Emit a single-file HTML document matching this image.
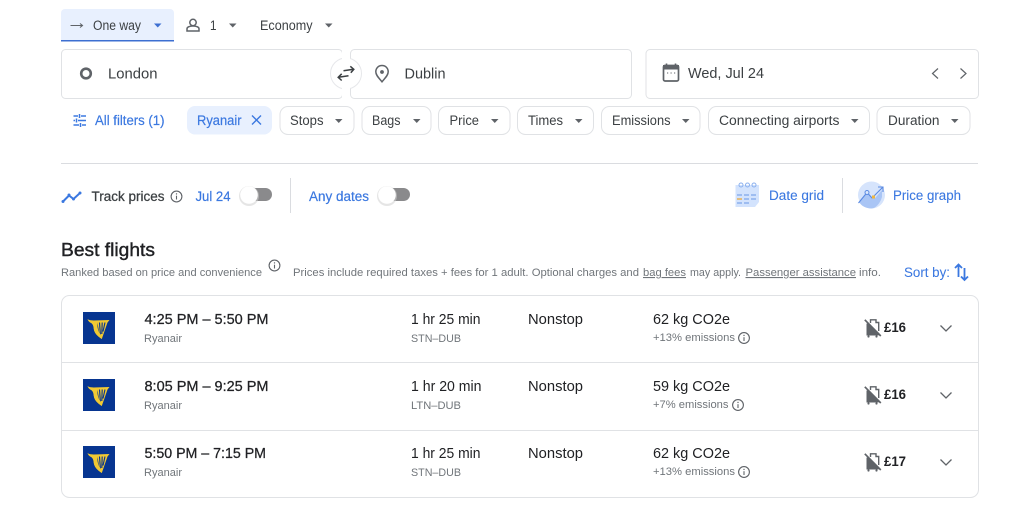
<!DOCTYPE html>
<html lang="en"><head><meta charset="utf-8"><title>Flights</title>
<style>
html,body{margin:0;padding:0;background:#fff;width:1024px;height:525px;overflow:hidden}
svg{display:block;filter:blur(.35px)}
text{font-family:"Liberation Sans",Arial,sans-serif}
.g{fill:#3c4043;font-size:13.500px}
.l{fill:#3c4043;font-size:14.500px}
.d{fill:#202124;font-size:14.500px}
.m{fill:#202124;font-size:14.500px;stroke:#202124;stroke-width:.25}
.b{fill:#3b78e0;font-size:13.500px;stroke:#3b78e0;stroke-width:.2}
.s{fill:#70757a;font-size:11px}
.c{fill:none;stroke:#e0e2e5;stroke-width:1}
.i{fill:none;stroke:#5f6368;stroke-width:1.100}
</style></head><body>
<svg width="1024" height="525" viewBox="0 0 1024 525" xmlns="http://www.w3.org/2000/svg">
<defs>
<g id="logo">
<rect width="32" height="32" fill="#073590"/>
<path d="M4.500 7C6.500 8.500 8.500 8.200 10.500 8.500L26.500 8L24.500 10.500L18.800 27C15 24.500 11.500 21.500 10.800 17C10.500 14 9.800 12 8 11C6.500 10.200 5 9 4.500 7Z" fill="#f1c933"/>
<path d="M13.800 10.500L15.800 21.500M16.500 10.500L17.400 22.500M19.200 10.500L18.800 22M22 10.500L20 19.500" stroke="#073590" stroke-width="1.150" fill="none"/>
<path d="M12.500 10.300L14.500 10.300C14 15 15 20 18.500 23.500L18.800 27C15 24.500 11.500 21.500 10.800 17C10.700 14.500 11 12 12.500 10.300Z" fill="#f1c933"/>
</g>
<g id="bag">
<path d="M2.500 4.500V16.500H14.500V14.500L4.500 4.500Z" fill="#5f6368"/>
<path d="M6.500 4V.8H12V3.500H14.700V12" fill="none" stroke="#5f6368" stroke-width="1.400"/>
<path d="M.8 .8L16.800 17" stroke="#5f6368" stroke-width="1.700"/>
<circle cx="4.500" cy="17.500" r="1.100" fill="#5f6368"/><circle cx="12.500" cy="17.500" r="1.100" fill="#5f6368"/>
</g>
<path id="car" d="M0 0H7.500L3.750 4Z" fill="#5f6368"/>
<g id="info"><circle r="5.400" class="i"/><path d="M0 -.8V3" stroke="#5f6368" stroke-width="1.100"/><circle cy="-2.600" r=".7" fill="#5f6368"/></g>
<path id="chev" d="M-5.500 -2.500L0 3L5.500 -2.500" fill="none" stroke="#5f6368" stroke-width="1.300"/>
</defs>

<!-- top selectors -->
<path d="M61 41V13a4 4 0 0 1 4-4H170a4 4 0 0 1 4 4V41Z" fill="#e8f0fe"/>
<rect x="61" y="40" width="113" height="1.500" fill="#3d6fd1"/>
<path d="M70.500 25.500H82M80 23.500L82.500 25.500L80 27.500" fill="none" stroke="#5f6368" stroke-width="1.100"/>
<text x="93" y="30" class="g" textLength="48" lengthAdjust="spacingAndGlyphs">One way</text>
<path d="M154 23.500H161.500L157.750 27.500Z" fill="#3d6fd1"/>
<circle cx="193" cy="22.500" r="3.200" class="i" style="stroke-width:1.500"/>
<path d="M187 31V28.800C187 27 190 26 193 26S199 27 199 28.800V31Z" class="i" style="stroke-width:1.500"/>
<text x="210" y="30" class="g" textLength="6.500" lengthAdjust="spacingAndGlyphs">1</text>
<use href="#car" x="229" y="23.500"/>
<text x="260" y="30" class="g" textLength="52.500" lengthAdjust="spacingAndGlyphs">Economy</text>
<use href="#car" x="325" y="23.500"/>

<!-- search boxes -->
<rect x="61.500" y="49.500" width="281" height="49" rx="4" class="c"/>
<rect x="350.500" y="49.500" width="281" height="49" rx="4" class="c"/>
<rect x="646" y="49.500" width="332.500" height="49" rx="4" class="c"/>
<circle cx="346" cy="73.500" r="15.500" fill="#fff" stroke="#e6e7ea"/>
<rect x="342" y="50" width="8" height="10" fill="#fff"/>
<rect x="342" y="87" width="8" height="12" fill="#fff"/>
<path d="M343.500 70.800L353.500 69.300M350.300 66.300L353.800 69.300L350.800 72.800" fill="none" stroke="#3c4043" stroke-width="1.500"/>
<path d="M348.500 75.800L338.500 77.300M341.700 73.800L338.200 77.300L341.700 80.500" fill="none" stroke="#3c4043" stroke-width="1.500"/>
<circle cx="86" cy="73.500" r="4.800" fill="none" stroke="#5f6368" stroke-width="2.600"/>
<text x="108" y="78.500" class="l" textLength="49.500" lengthAdjust="spacingAndGlyphs">London</text>
<path d="M382 65.500C378.300 65.500 375.800 68.300 375.800 71.800C375.800 75.500 379.500 78.500 382 81.800C384.500 78.500 388.200 75.500 388.200 71.800C388.200 68.300 385.700 65.500 382 65.500Z" class="i" style="stroke-width:1.500"/>
<circle cx="382" cy="72" r="1.900" fill="#5f6368"/>
<text x="404.500" y="78.500" class="l" textLength="41" lengthAdjust="spacingAndGlyphs">Dublin</text>
<rect x="663.500" y="65.500" width="15" height="15.500" rx="1.500" fill="none" stroke="#5f6368" stroke-width="1.700"/>
<rect x="663" y="65" width="16" height="4.500" fill="#5f6368"/>
<path d="M666.500 63.500V66M675.500 63.500V66" stroke="#5f6368" stroke-width="1.600"/>
<path d="M667 73H668.200M670.500 73H671.700M674 73H675.200" stroke="#5f6368"/>
<text x="688" y="78" class="l" textLength="76" lengthAdjust="spacingAndGlyphs">Wed, Jul 24</text>
<path d="M938 68.500L932.500 73.500L938 78.500" fill="none" stroke="#5f6368" stroke-width="1.200"/>
<path d="M960.500 68.500L966 73.500L960.500 78.500" fill="none" stroke="#5f6368" stroke-width="1.200"/>

<!-- filters -->
<path d="M73.500 116H78M81 116H86M73.500 120.500H75M78 120.500H86M73.500 125H79M82 125H86M79.500 114V118M76.500 118.500V122.500M80.500 123V127" fill="none" stroke="#3b78e0" stroke-width="1.500"/>
<text x="95" y="125" class="b" textLength="69.500" lengthAdjust="spacingAndGlyphs">All filters (1)</text>
<rect x="187" y="106" width="85" height="28.500" rx="8" fill="#e8f0fe"/>
<text x="197" y="125" class="b" textLength="44.500" lengthAdjust="spacingAndGlyphs">Ryanair</text>
<path d="M252 115.500L261 124.500M261 115.500L252 124.500" stroke="#3b78e0" stroke-width="1.400"/>
<rect x="280" y="106.500" width="74" height="28" rx="8" class="c"/>
<text x="290" y="125" class="g" textLength="33.500" lengthAdjust="spacingAndGlyphs">Stops</text><use href="#car" x="335" y="119"/>
<rect x="362" y="106.500" width="69" height="28" rx="8" class="c"/>
<text x="372" y="125" class="g" textLength="28.500" lengthAdjust="spacingAndGlyphs">Bags</text><use href="#car" x="413" y="119"/>
<rect x="438.500" y="106.500" width="71.500" height="28" rx="8" class="c"/>
<text x="449.500" y="125" class="g" textLength="29.500" lengthAdjust="spacingAndGlyphs">Price</text><use href="#car" x="491" y="119"/>
<rect x="517.500" y="106.500" width="76" height="28" rx="8" class="c"/>
<text x="528" y="125" class="g" textLength="35" lengthAdjust="spacingAndGlyphs">Times</text><use href="#car" x="575" y="119"/>
<rect x="601.500" y="106.500" width="98.500" height="28" rx="8" class="c"/>
<text x="612" y="125" class="g" textLength="58.500" lengthAdjust="spacingAndGlyphs">Emissions</text><use href="#car" x="682" y="119"/>
<rect x="708.500" y="106.500" width="161" height="28" rx="8" class="c"/>
<text x="719" y="125" class="g" textLength="120.500" lengthAdjust="spacingAndGlyphs">Connecting airports</text><use href="#car" x="851" y="119"/>
<rect x="877" y="106.500" width="93" height="28" rx="8" class="c"/>
<text x="888" y="125" class="g" textLength="51.500" lengthAdjust="spacingAndGlyphs">Duration</text><use href="#car" x="951" y="119"/>

<rect x="61" y="163" width="917" height="1" fill="#dadce0"/>

<!-- tracking -->
<path d="M63 201.500L69 195.500L73.500 199L80 193" fill="none" stroke="#3b78e0" stroke-width="2"/>
<g fill="#3b78e0"><circle cx="63" cy="201.500" r="1.500"/><circle cx="69" cy="195" r="1.500"/><circle cx="73.500" cy="199" r="1.500"/><circle cx="80" cy="193" r="1.500"/></g>
<text x="91.500" y="201" class="g" textLength="73" lengthAdjust="spacingAndGlyphs" style="stroke:#3c4043;stroke-width:.25">Track prices</text>
<use href="#info" x="176.500" y="196.500"/>
<text x="195.500" y="201" class="b" textLength="35" lengthAdjust="spacingAndGlyphs">Jul 24</text>
<rect x="245" y="188" width="27" height="13" rx="6.500" fill="#8a8a8c"/>
<circle cx="249" cy="196" r="10" fill="#d0d0d0" opacity=".55"/>
<circle cx="249" cy="195" r="8.800" fill="#fff"/>
<rect x="290" y="178" width="1" height="35" fill="#dadce0"/>
<text x="309" y="201" class="b" textLength="60" lengthAdjust="spacingAndGlyphs">Any dates</text>
<rect x="383" y="188" width="27" height="13" rx="6.500" fill="#8a8a8c"/>
<circle cx="387" cy="196" r="10" fill="#d0d0d0" opacity=".55"/>
<circle cx="387" cy="195" r="8.800" fill="#fff"/>

<!-- date grid icon -->
<path d="M735.500 185H759V202L755 207H735.500Z" fill="#d3e3fd"/>
<g fill="none" stroke="#8ab0ee" stroke-width="1"><circle cx="741" cy="185" r="2"/><circle cx="747.500" cy="185" r="2"/><circle cx="754" cy="185" r="2"/></g>
<path d="M737 195H742M744 195H749M751 195H756M744 199H749M751 199H756M737 203H742M744 203H749" stroke="#7fa6ea" stroke-width="1.200"/>
<path d="M737 199H742" stroke="#e9a93b" stroke-width="1.300"/>
<text x="769" y="200" class="b" textLength="55" lengthAdjust="spacingAndGlyphs" style="stroke-width:.1">Date grid</text>
<rect x="842" y="178" width="1" height="35" fill="#dadce0"/>
<!-- price graph icon -->
<circle cx="871.500" cy="195" r="13.500" fill="#d6e4fc"/>
<path d="M859 202L867 192L871 196C872 198 875 199 876 197L882 190V197C880 204 875 208.500 871.500 208.500C866 208.500 861.500 206 859 202Z" fill="#a9c5f5"/>
<path d="M858.500 203L867 192.500L872 198L882.500 187.500M878 187H883V192" fill="none" stroke="#5a8ae2" stroke-width="1.100"/>
<circle cx="867" cy="192.500" r="2" fill="#dce8fc" stroke="#5a8ae2"/>
<rect x="872" y="195.500" width="3" height="3" fill="#f0b73f"/>
<text x="893" y="200" class="b" textLength="68" lengthAdjust="spacingAndGlyphs" style="stroke-width:.1">Price graph</text>

<!-- heading -->
<text x="61" y="256" style="font-size:18.500px;fill:#202124;stroke:#202124;stroke-width:.4" textLength="94" lengthAdjust="spacingAndGlyphs">Best flights</text>
<text x="61" y="276" class="s" textLength="201" lengthAdjust="spacingAndGlyphs">Ranked based on price and convenience</text>
<use href="#info" x="274.500" y="265.500"/>
<text x="293" y="276" class="s" textLength="346" lengthAdjust="spacingAndGlyphs">Prices include required taxes + fees for 1 adult. Optional charges and</text>
<text x="643" y="276" class="s" textLength="43" lengthAdjust="spacingAndGlyphs" text-decoration="underline">bag fees</text>
<text x="690" y="276" class="s" textLength="51" lengthAdjust="spacingAndGlyphs">may apply.</text>
<text x="745.500" y="276" class="s" textLength="110.500" lengthAdjust="spacingAndGlyphs" text-decoration="underline">Passenger assistance</text>
<text x="859" y="276" class="s" textLength="22" lengthAdjust="spacingAndGlyphs">info.</text>
<text x="904" y="277" class="b" textLength="46" lengthAdjust="spacingAndGlyphs" style="stroke-width:.05">Sort by:</text>
<path d="M958.500 277V265M955 268L958.500 264.500L962 268" fill="none" stroke="#3b78e0" stroke-width="1.800"/>
<path d="M964.500 268V280M961 276.500L964.500 280L968 276.500" fill="none" stroke="#3b78e0" stroke-width="1.800"/>

<!-- results -->
<rect x="61.500" y="295.500" width="917" height="202" rx="8" class="c"/>
<rect x="62" y="362" width="916" height="1" fill="#e0e2e5"/>
<rect x="62" y="430" width="916" height="1" fill="#e0e2e5"/>

<!-- row 1 -->
<use href="#logo" x="83" y="312"/>
<text x="144.500" y="324" class="m" textLength="124" lengthAdjust="spacingAndGlyphs">4:25 PM – 5:50 PM</text>
<text x="144" y="342" class="s" textLength="38" lengthAdjust="spacingAndGlyphs">Ryanair</text>
<text x="411" y="324" class="d" textLength="69.500" lengthAdjust="spacingAndGlyphs">1 hr 25 min</text>
<text x="411" y="342" class="s" textLength="50" lengthAdjust="spacingAndGlyphs">STN–DUB</text>
<text x="528" y="324" class="d" textLength="55" lengthAdjust="spacingAndGlyphs">Nonstop</text>
<text x="653" y="324" class="d" textLength="77" lengthAdjust="spacingAndGlyphs">62 kg CO2e</text>
<text x="653" y="341" class="s" textLength="82" lengthAdjust="spacingAndGlyphs">+13% emissions</text>
<use href="#info" x="744" y="338"/>
<use href="#bag" x="864" y="319"/>
<text x="884" y="332" style="font-size:14px;font-weight:700;fill:#202124" textLength="22" lengthAdjust="spacingAndGlyphs">£16</text>
<use href="#chev" x="946" y="328"/>

<!-- row 2 -->
<use href="#logo" x="83" y="379"/>
<text x="144.500" y="391" class="m" textLength="124" lengthAdjust="spacingAndGlyphs">8:05 PM – 9:25 PM</text>
<text x="144" y="409" class="s" textLength="38" lengthAdjust="spacingAndGlyphs">Ryanair</text>
<text x="411" y="391" class="d" textLength="70.500" lengthAdjust="spacingAndGlyphs">1 hr 20 min</text>
<text x="411" y="409" class="s" textLength="50" lengthAdjust="spacingAndGlyphs">LTN–DUB</text>
<text x="528" y="391" class="d" textLength="55" lengthAdjust="spacingAndGlyphs">Nonstop</text>
<text x="653" y="391" class="d" textLength="77" lengthAdjust="spacingAndGlyphs">59 kg CO2e</text>
<text x="653" y="408" class="s" textLength="75.500" lengthAdjust="spacingAndGlyphs">+7% emissions</text>
<use href="#info" x="738" y="405"/>
<use href="#bag" x="864" y="386"/>
<text x="884" y="399" style="font-size:14px;font-weight:700;fill:#202124" textLength="22" lengthAdjust="spacingAndGlyphs">£16</text>
<use href="#chev" x="946" y="395"/>

<!-- row 3 -->
<use href="#logo" x="83" y="446"/>
<text x="144.500" y="458" class="m" textLength="121.500" lengthAdjust="spacingAndGlyphs">5:50 PM – 7:15 PM</text>
<text x="144" y="476" class="s" textLength="38" lengthAdjust="spacingAndGlyphs">Ryanair</text>
<text x="411" y="458" class="d" textLength="69.500" lengthAdjust="spacingAndGlyphs">1 hr 25 min</text>
<text x="411" y="476" class="s" textLength="50" lengthAdjust="spacingAndGlyphs">STN–DUB</text>
<text x="528" y="458" class="d" textLength="55" lengthAdjust="spacingAndGlyphs">Nonstop</text>
<text x="653" y="458" class="d" textLength="77" lengthAdjust="spacingAndGlyphs">62 kg CO2e</text>
<text x="653" y="475" class="s" textLength="82" lengthAdjust="spacingAndGlyphs">+13% emissions</text>
<use href="#info" x="744" y="472"/>
<use href="#bag" x="864" y="453"/>
<text x="884" y="466" style="font-size:14px;font-weight:700;fill:#202124" textLength="22" lengthAdjust="spacingAndGlyphs">£17</text>
<use href="#chev" x="946" y="462"/>
</svg>
</body></html>
